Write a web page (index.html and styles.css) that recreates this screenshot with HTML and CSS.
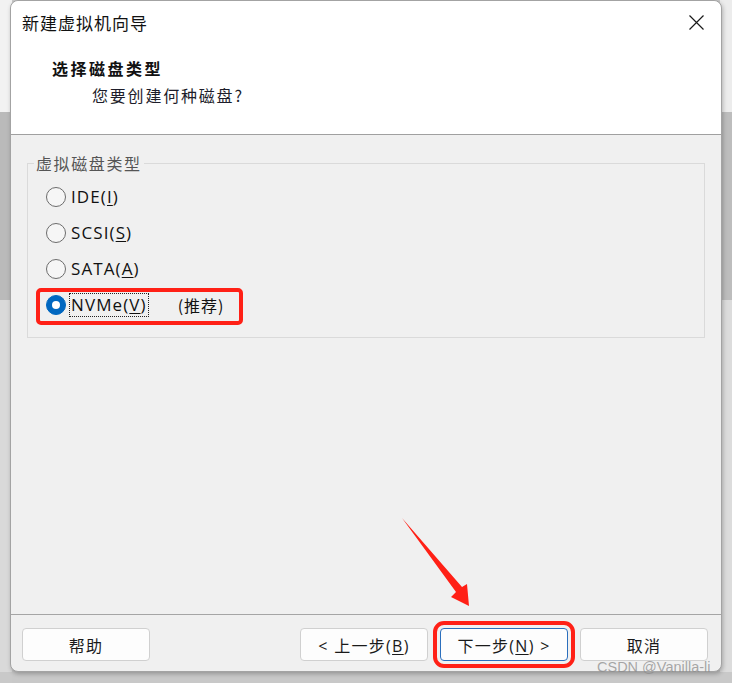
FILE: index.html
```html
<!DOCTYPE html>
<html lang="zh-CN">
<head>
<meta charset="utf-8">
<title>新建虚拟机向导</title>
<link rel="stylesheet" href="styles.css">
</head>
<body>
<div class="dialog">
  <div class="header">
    <div class="titlebar">
      <span class="title">新建虚拟机向导</span>
      <svg class="close" width="15" height="15" viewBox="0 0 15 15"><path d="M0.5 0.5 L14.5 14.5 M14.5 0.5 L0.5 14.5" stroke="#1a1a1a" stroke-width="1.2" fill="none"/></svg>
    </div>
    <div class="heading">选择磁盘类型</div>
    <div class="subheading">您要创建何种磁盘?</div>
  </div>
  <div class="body">
    <fieldset class="group">
      <legend>虚拟磁盘类型</legend>
      <div class="row"><span class="radio"></span><span class="label">IDE(<u>I</u>)</span></div>
      <div class="row"><span class="radio"></span><span class="label">SCSI(<u>S</u>)</span></div>
      <div class="row"><span class="radio"></span><span class="label">SATA(<u>A</u>)</span></div>
      <div class="row marked"><span class="radio checked"></span><span class="label focus">NVMe(<u>V</u>)</span><span class="hint">(推荐)</span></div>
    </fieldset>
  </div>
  <div class="footer">
    <button class="btn">帮助</button>
    <div class="nav">
      <button class="btn">&lt; 上一步(<u>B</u>)</button>
      <button class="btn primary">下一步(<u>N</u>) &gt;</button>
      <button class="btn">取消</button>
    </div>
  </div>
</div>
<svg class="arrow" width="732" height="683" viewBox="0 0 732 683"><polygon points="402,518 462,587 467,584 469,606 451,597 456,592" fill="#ff2016"/></svg>
<div class="watermark">CSDN @Vanilla-li</div>
</body>
</html>
```

FILE: styles.css
```css
html, body {
  margin: 0;
  padding: 0;
}
body {
  width: 732px;
  height: 683px;
  overflow: hidden;
  position: relative;
  font-family: "Open Sans", "Noto Sans CJK SC", sans-serif;
  color: #1a1a1a;
  background:
    linear-gradient(to bottom, #f2f2f2 0 112px, #bababa 112px 300px, #d9d9d9 300px 672px, #c9c9c9 672px) left top / 12px 100% no-repeat,
    linear-gradient(to bottom, #ececec 0 112px, #bdbdbd 112px 300px, #dcdcdc 300px 672px, #c9c9c9 672px) right top / 12px 100% no-repeat,
    #c8c8c8;
}
.dialog {
  margin-left: 10px;
  width: 712px;
  height: 672px;
  box-sizing: border-box;
  border: 1px solid #a3a3a3;
  border-radius: 8px;
  background: #f0f0f0;
  box-shadow: 1px 2px 4px rgba(0, 0, 0, 0.25);
  display: flex;
  flex-direction: column;
  overflow: hidden;
}
.header {
  height: 133px;
  background: #ffffff;
  border-bottom: 1px solid #a0a0a0;
  border-radius: 7px 7px 0 0;
  flex: none;
}
.titlebar {
  height: 42px;
  display: flex;
  align-items: center;
  justify-content: space-between;
  padding: 0 17px 0 11px;
}
.title {
  font-family: "Noto Sans CJK SC", sans-serif;
  font-size: 17px;
  letter-spacing: 1px;
  color: #111;
}
.close {
  display: block;
  margin-top: 1px;
}
.heading {
  margin-top: 15px;
  padding-left: 41px;
  font-family: "Noto Sans CJK SC", sans-serif;
  font-size: 16px;
  font-weight: 700;
  letter-spacing: 2.5px;
  line-height: 20px;
  color: #111;
}
.subheading {
  margin-top: 7px;
  padding-left: 81px;
  font-family: "Noto Sans CJK SC", sans-serif;
  font-size: 16px;
  letter-spacing: 1.8px;
  line-height: 20px;
  color: #1d1d2a;
}
.body {
  flex: 1;
  padding-top: 18px;
}
.group {
  margin: 0 16px;
  padding: 6px 0 14px 0;
  border: 1px solid #dadada;
  min-width: 0;
}
.group legend {
  margin-left: 6px;
  padding: 0 2px;
  font-family: "Noto Sans CJK SC", sans-serif;
  font-size: 16px;
  letter-spacing: 1.6px;
  line-height: 20px;
  color: #555;
}
.row {
  position: relative;
  display: flex;
  align-items: center;
  width: 193px;
  height: 36px;
  margin-left: 12px;
  padding-left: 6px;
}
.radio {
  width: 18px;
  height: 18px;
  border: 1px solid #6c6c6c;
  border-radius: 50%;
  background: #f6f6f6;
  flex: none;
  box-sizing: content-box;
}
.radio.checked {
  border-color: #0067c0;
  background: #0067c0;
  position: relative;
}
.radio.checked::after {
  content: "";
  position: absolute;
  left: 5px;
  top: 5px;
  width: 8px;
  height: 8px;
  border-radius: 50%;
  background: #fff;
}
.label {
  margin-left: 5px;
  font-size: 17px;
  letter-spacing: 1.1px;
  line-height: 20px;
  color: #111;
}
.label u {
  text-underline-offset: 2px;
}
.label.focus {
  outline: 1px dotted #222;
  outline-offset: 1px;
}
.hint {
  margin-left: 31px;
  font-family: "Noto Sans CJK SC", sans-serif;
  font-size: 16px;
  letter-spacing: 1px;
  color: #111;
}
.row.marked::before {
  content: "";
  position: absolute;
  left: -4px;
  right: -4px;
  top: 1px;
  bottom: -2px;
  border: 4px solid #ff2016;
  border-radius: 5px;
}
.footer {
  flex: none;
  height: 57px;
  box-sizing: border-box;
  border-top: 1px solid #a5a5a5;
  display: flex;
  align-items: flex-start;
  justify-content: space-between;
  padding: 13px 13px 0 11px;
}
.nav {
  display: flex;
  gap: 12px;
}
.btn {
  width: 128px;
  height: 33px;
  box-sizing: border-box;
  border: 1px solid #d0d0d0;
  border-radius: 4px;
  background: #fdfdfd;
  font-family: "Open Sans", "Noto Sans CJK SC", sans-serif;
  font-size: 16px;
  letter-spacing: 1.3px;
  color: #1a1a1a;
  padding: 0;
}
.btn u {
  text-underline-offset: 2px;
}
.btn.primary {
  border-color: #2b6fbd;
  outline: 4px solid #ff2016;
  outline-offset: 3px;
}
.arrow {
  position: absolute;
  left: 0;
  top: 0;
  pointer-events: none;
}
.watermark {
  position: absolute;
  left: 597px;
  top: 657px;
  font-family: "Liberation Sans", sans-serif;
  font-size: 14.5px;
  line-height: 20px;
  color: rgba(140, 140, 140, 0.75);
  pointer-events: none;
}
```
